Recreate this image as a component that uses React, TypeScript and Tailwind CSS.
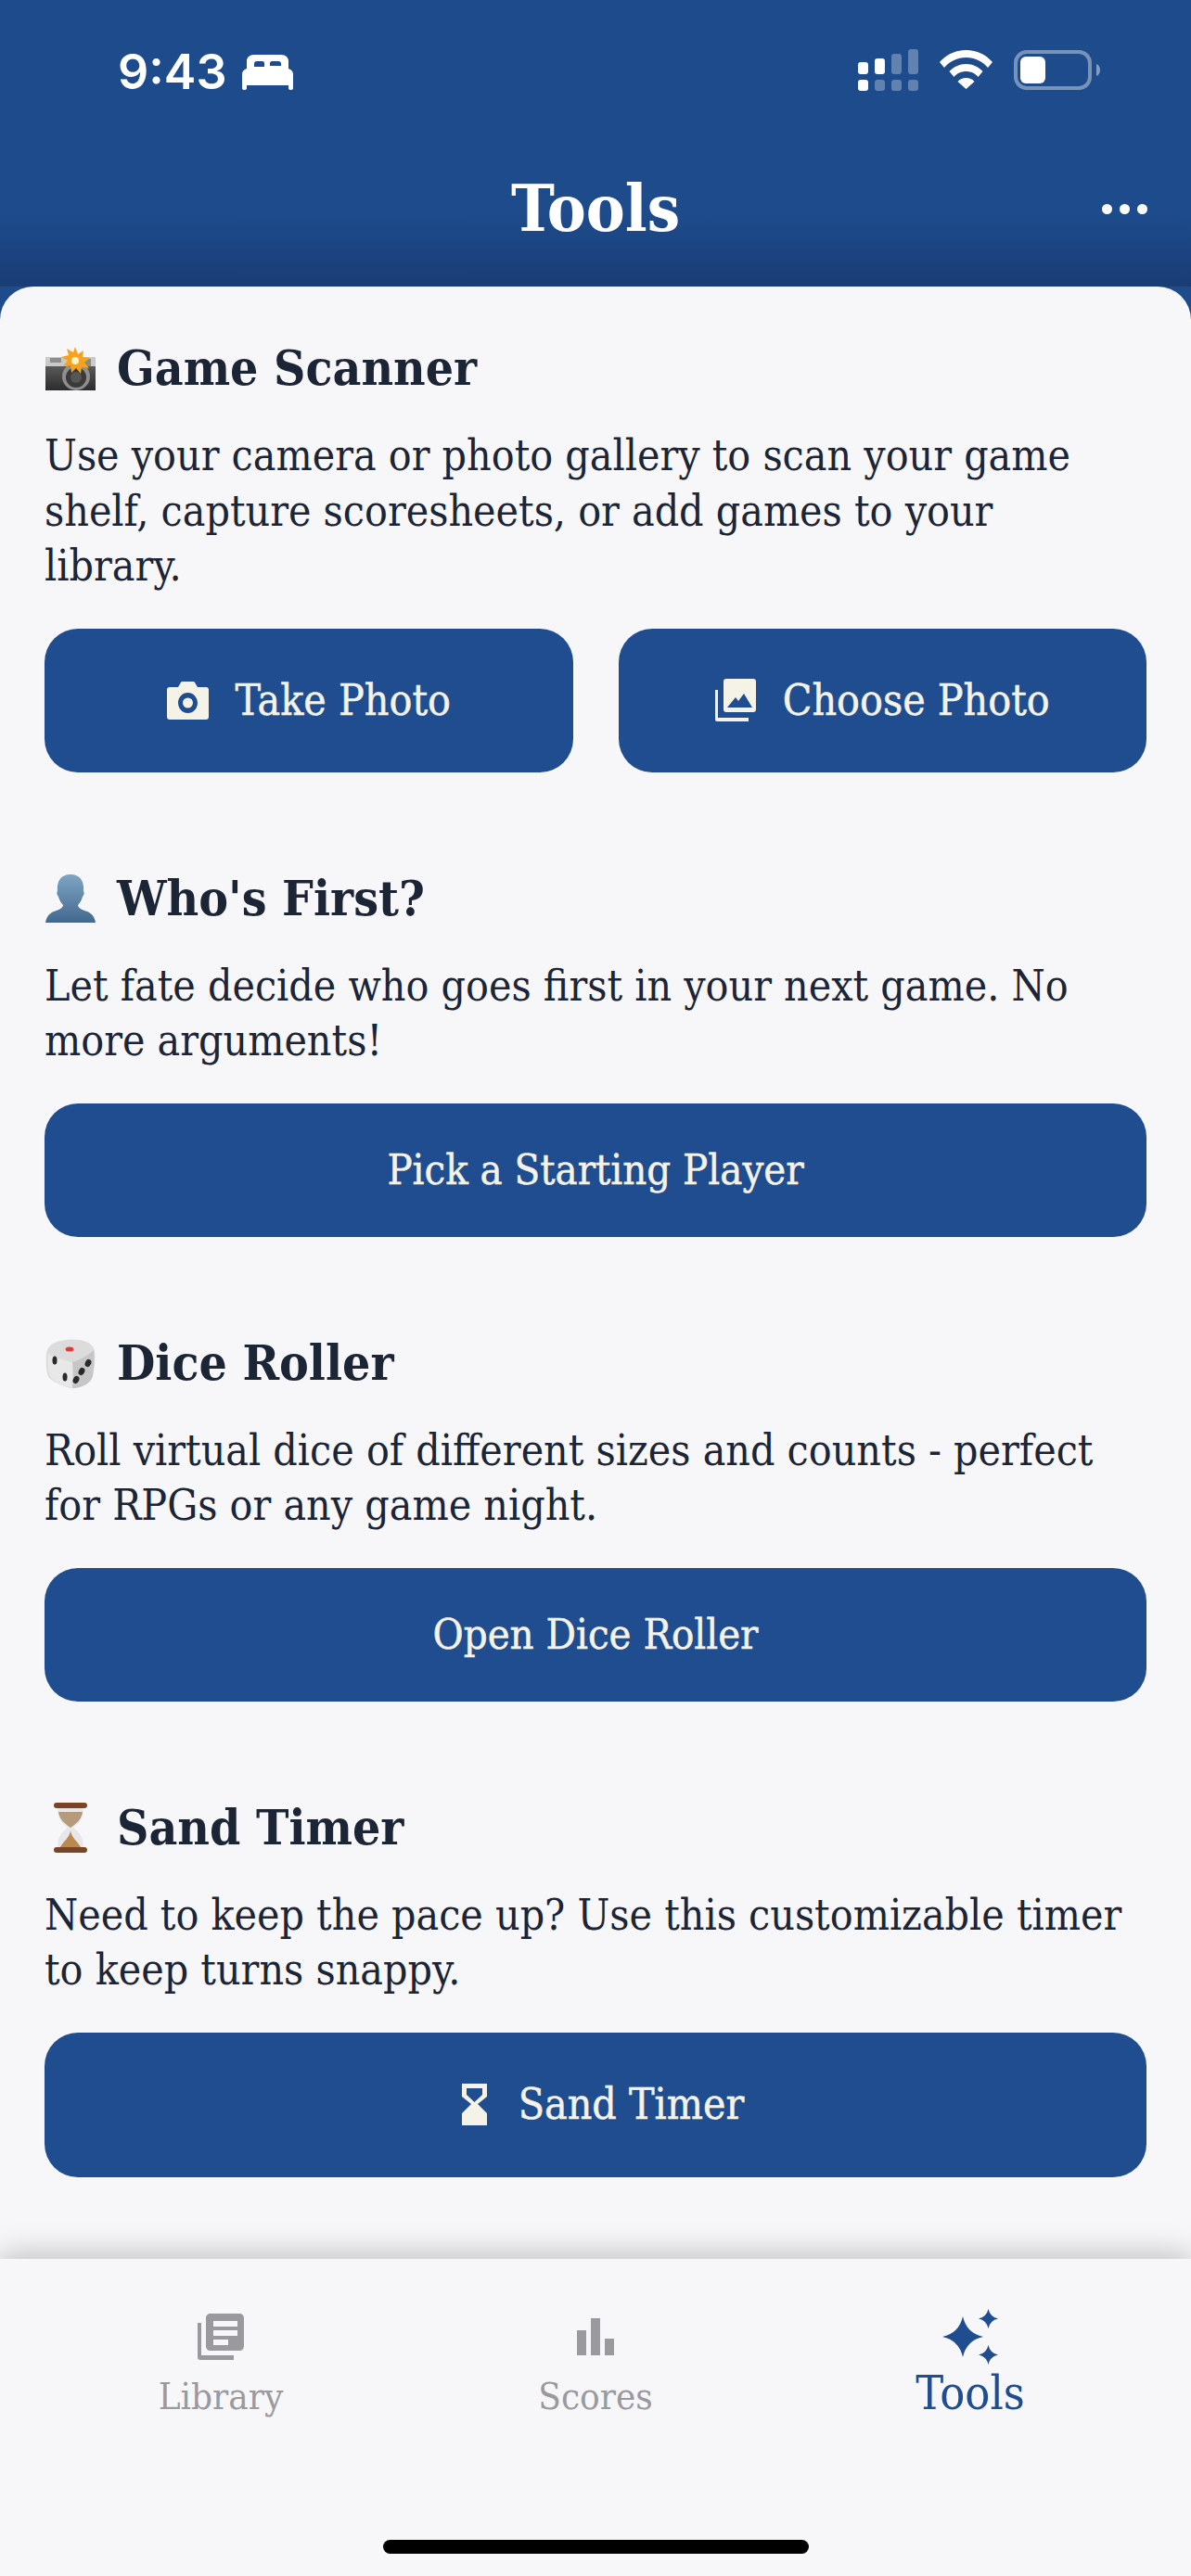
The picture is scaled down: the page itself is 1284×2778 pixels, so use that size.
import { ReactNode } from "react";

const serif = "font-['DejaVu_Serif_Condensed','DejaVu_Serif',serif] [font-stretch:condensed]";

function Star({ cx, cy, r }: { cx: number; cy: number; r: number }) {
  const k = r * 0.18;
  return (
    <path
      d={`M${cx} ${cy - r}Q${cx + k} ${cy - k} ${cx + r} ${cy}Q${cx + k} ${cy + k} ${cx} ${cy + r}Q${cx - k} ${cy + k} ${cx - r} ${cy}Q${cx - k} ${cy - k} ${cx} ${cy - r}Z`}
    />
  );
}

function CameraFlashEmoji() {
  return (
    <svg width="56" height="47" viewBox="-1 0 56 47">
      <defs>
        <linearGradient id="camBody" x1="0" y1="0" x2="0" y2="1">
          <stop offset="0" stopColor="#5a5a5a" />
          <stop offset="1" stopColor="#2c2c2c" />
        </linearGradient>
      </defs>
      <rect x="0" y="11" width="54" height="12" fill="#c9c9c9" />
      <rect x="0" y="21" width="54" height="26" fill="url(#camBody)" />
      <rect x="5" y="12" width="12" height="5" fill="#8d8d8d" />
      <rect x="38" y="13" width="11" height="8" fill="#8a8a80" />
      <circle cx="33" cy="32" r="15" fill="#8e8e8e" />
      <circle cx="33" cy="33" r="11" fill="#3a3a3a" />
      <circle cx="33" cy="33" r="6" fill="#565656" />
      <path
        d="M32 0l3 8 6-4-1 7 8 1-6 5 5 6-8-1-1 7-5-6-5 5-1-8-8 1 5-6-7-4 8-2-2-7 7 4z"
        fill="#f6a21d"
      />
      <circle cx="32" cy="15" r="4" fill="#fff3c8" />
    </svg>
  );
}

function PersonEmoji() {
  return (
    <svg width="54" height="52" viewBox="0 0 54 52">
      <defs>
        <linearGradient id="personFill" x1="0" y1="0" x2="0" y2="1">
          <stop offset="0" stopColor="#7fa5c4" />
          <stop offset="1" stopColor="#43688e" />
        </linearGradient>
      </defs>
      <path
        d="M27 0c11 0 15 8 14 18 1 1 1 4-1 6-1 4-3 7-5 9 0 3 4 5 10 7 5 2 8 6 9 12H0c1-6 4-10 9-12 6-2 10-4 10-7-2-2-4-5-5-9-2-2-2-5-1-6C12 8 16 0 27 0z"
        fill="url(#personFill)"
      />
    </svg>
  );
}

function DiceEmoji() {
  return (
    <svg width="54" height="56" viewBox="0 0 54 56">
      <path d="M10 6c8-4 26-5 34-1 5 2 8 5 9 10 1 8 0 20-2 27-1 4-4 7-9 10-4 2-11 4-15 3-8-2-19-7-23-11-3-4-4-18-3-26 0-5 4-10 9-12z" fill="#dcdcdc" />
      <path d="M3 18c-1 8 0 22 3 26 4 4 15 9 23 11 1-8 1-22 0-28-8-2-20-5-26-9z" fill="#e8e8e8" />
      <path d="M29 27c7-2 17-7 23-13 1 8 0 21-1 28-1 4-4 7-9 10-4 2-9 3-13 3 1-8 1-22 0-28z" fill="#c6c6c6" />
      <ellipse cx="26" cy="13" rx="4.5" ry="2.5" fill="#e23b33" />
      <ellipse cx="10" cy="25" rx="2.5" ry="4.5" fill="#2a2a2a" />
      <ellipse cx="21" cy="43" rx="2.5" ry="4.5" fill="#2a2a2a" />
      <ellipse cx="46" cy="28" rx="3.2" ry="4.2" fill="#2a2a2a" transform="rotate(25 46 28)" />
      <ellipse cx="39" cy="37" rx="3.2" ry="4.2" fill="#2a2a2a" transform="rotate(25 39 37)" />
      <ellipse cx="33" cy="46" rx="3.2" ry="4.2" fill="#2a2a2a" transform="rotate(25 33 46)" />
    </svg>
  );
}

function HourglassEmoji() {
  return (
    <svg width="36" height="54" viewBox="0 0 36 54">
      <path d="M4 5c0 12 4 17 11 22C8 32 4 37 4 49h28c0-12-4-17-11-22 7-5 11-10 11-22z" fill="#e8e8ec" />
      <path d="M5 10c1 8 6 12 13 17 7-5 12-9 13-17z" fill="#b59b7c" />
      <path d="M18 30c-1 8-7 11-11 18h22c-4-7-10-10-11-18z" fill="#b9894f" />
      <rect x="0" y="0" width="36" height="6" rx="3" fill="#7a4526" />
      <rect x="0" y="48" width="36" height="6" rx="3" fill="#7a4526" />
    </svg>
  );
}

function CameraIcon() {
  return (
    <svg width="45" height="41" viewBox="0 0 45 41">
      <path
        fillRule="evenodd"
        d="M3 6h9l3-5c.3-.6 1-1 2-1h11c1 0 1.700.4 2 1l3 5h9c2 0 3 1 3 3v29c0 2-1 3-3 3H3c-2 0-3-1-3-3V9c0-2 1-3 3-3zm19.500 6a10.500 11 0 1 0 0 22 10.500 11 0 0 0 0-22zm0 5.500a5.500 5.500 0 1 1 0 11 5.500 5.500 0 0 1 0-11z"
        fill="#f5f2e8"
      />
    </svg>
  );
}

function GalleryIcon() {
  return (
    <svg width="44" height="46" viewBox="0 0 44 46" fill="#f5f2e8">
      <path d="M0 12h3v30h33v4H2c-1 0-2-1-2-2z" />
      <path
        fillRule="evenodd"
        d="M12 0h29c2 0 3 1 3 3v30c0 2-1 3-3 3H12c-2 0-3-1-3-3V3c0-2 1-3 3-3zm1 31h27l-9-15-6 8-3-4z"
      />
    </svg>
  );
}

function HourglassIcon() {
  return (
    <svg className="ml-[16px] mr-[5px]" width="27" height="45" viewBox="0 0 27 45" fill="#f5f2e8">
      <path
        fillRule="evenodd"
        d="M0 0h27v14l-10 8 10 10v13H0V32l10-10L0 14zm5 5v7l8.500 8L22 12V5z"
      />
    </svg>
  );
}

function LibraryIcon() {
  return (
    <svg width="50" height="50" viewBox="0 0 50 50" fill="#9a9a9e">
      <path d="M0 10h4v35h35v5H3c-2 0-3-1-3-3z" />
      <path
        fillRule="evenodd"
        d="M14 0h31c3 0 5 2 5 5v30c0 3-2 5-5 5H14c-3 0-5-2-5-5V5c0-3 2-5 5-5zm3 8v6h26V8zm0 10v6h26v-6zm0 10v6h16v-6z"
      />
    </svg>
  );
}

function ScoresIcon() {
  return (
    <svg width="40" height="40" viewBox="0 0 40 40" fill="#9a9a9e">
      <rect x="0" y="13" width="10" height="27" />
      <rect x="15" y="0" width="10" height="40" />
      <rect x="30" y="22" width="10" height="18" />
    </svg>
  );
}

function ToolsIcon() {
  return (
    <svg width="60" height="60" viewBox="0 0 60 60" fill="#1f4d8f">
      <Star cx={22} cy={30} r={22} />
      <Star cx={49.5} cy={10.5} r={10.5} />
      <Star cx={49.5} cy={49.5} r={10.5} />
    </svg>
  );
}

function BedIcon() {
  return (
    <svg width="55" height="38" viewBox="0 0 55 38" fill="#fff">
      <path
        fillRule="evenodd"
        d="M13 0h29c5 0 8 3 8 7v8c3 1 5 3 5 6v15c0 1-1 2-2 2h-1c-1 0-2-1-2-2v-3H5v3c0 1-1 2-2 2H2c-1 0-2-1-2-2V21c0-3 2-5 5-6V7c0-4 3-7 8-7zm3 7c-2 0-3 1-3 3v3h11v-4c0-1-1-2-2-2zm16 0c-1 0-2 1-2 2v3h12v-2c0-2-1-3-3-3z"
      />
    </svg>
  );
}

function StatusIcons() {
  return (
    <div className="flex items-start gap-[23px]">
      <svg width="65" height="45" viewBox="0 0 65 45" fill="#fff">
        <rect x="0" y="14" width="11" height="13" rx="3" />
        <rect x="18" y="10" width="11" height="17" rx="3" />
        <rect x="36" y="5" width="11" height="22" rx="3" fillOpacity="0.3" />
        <rect x="54" y="0" width="11" height="27" rx="3" fillOpacity="0.3" />
        <rect x="0" y="33" width="11" height="12" rx="3" />
        <rect x="18" y="33" width="11" height="12" rx="3" fillOpacity="0.3" />
        <rect x="36" y="33" width="11" height="12" rx="3" fillOpacity="0.3" />
        <rect x="54" y="33" width="11" height="12" rx="3" fillOpacity="0.3" />
      </svg>
      <svg className="mt-[1px]" width="57" height="42" viewBox="0 0 57 42" fill="#fff">
        <path d="M28.500 0C40 0 50 5 57 13l-5 6C46 12 38 8 28.500 8S11 12 5 19l-5-6C7 5 17 0 28.500 0z" />
        <path d="M28.500 15c7 0 13.500 3 18 8l-5 6c-3-4-8-6-13-6s-10 2-13 6l-5-6c4.500-5 11-8 18-8z" />
        <path d="M28.500 30c3.500 0 6.500 1 9 4l-9 8-9-8c2.500-3 5.500-4 9-4z" />
      </svg>
      <svg className="mt-[1px]" width="93" height="43" viewBox="0 0 93 43">
        <rect x="2" y="2" width="80" height="39" rx="12" fill="none" stroke="#fff" strokeOpacity="0.4" strokeWidth="4" />
        <rect x="7" y="7" width="27" height="29" rx="6" fill="#fff" />
        <path d="M89 15c3 1 4 4 4 6.500s-1 5.500-4 6.500z" fill="#fff" fillOpacity="0.45" />
      </svg>
    </div>
  );
}

function ActionButton({ height, icon, label }: { height: string; icon?: ReactNode; label: string }) {
  return (
    <button className={`flex w-full items-center justify-center gap-[29px] rounded-[36px] bg-[#1f4d8f] ${height}`}>
      {icon}
      <span className={`font-medium text-[#f5f2e8] [-webkit-text-stroke:0.5px_#f5f2e8] ${icon ? "text-[46px]" : "text-[45px]"}`}>{label}</span>
    </button>
  );
}

function Section({ emoji, title, text, children }: { emoji: ReactNode; title: string; text: string[]; children: ReactNode }) {
  return (
    <section>
      <h2 className="flex h-[72px] items-center gap-[22px] text-[53px] font-bold text-[#1c2535]">
        <span className="flex w-[56px] items-center justify-center">{emoji}</span>
        {title}
      </h2>
      <p className="mb-[37px] mt-[29px] text-[46px] leading-[59.5px] text-[#1c2535]">
        {text.map((line) => (
          <span key={line} className="block whitespace-nowrap">
            {line}
          </span>
        ))}
      </p>
      {children}
    </section>
  );
}

function NavItem({ icon, label, active }: { icon: ReactNode; label: string; active?: boolean }) {
  return (
    <div className="flex h-[130px] flex-col items-center">
      <div className="flex h-[72px] items-center">{icon}</div>
      <span className={active ? "text-[50px] leading-[50px] text-[#1f4d8f]" : "mt-[3px] text-[40px] leading-[50px] text-[#9a9a9e]"}>
        {label}
      </span>
    </div>
  );
}

export default function App() {
  return (
    <div className={`flex h-[2778px] w-[1284px] flex-col overflow-hidden bg-[#1e4b8c] ${serif}`}>
      <header className="relative h-[309px] shrink-0 bg-gradient-to-b from-[#1e4b8c] from-75% to-[#1a3d75]">
        <div className="flex h-[180px] items-start justify-between pl-[127px] pr-[98px] pt-[53px]">
          <div className="flex items-center gap-[16px]">
            <span className="font-['Inter',sans-serif] text-[52px] font-semibold leading-[50px] text-white [font-stretch:normal]">9:43</span>
            <BedIcon />
          </div>
          <StatusIcons />
        </div>
        <h1 className="text-center text-[70px] font-bold leading-[90px] text-white">Tools</h1>
        <div className="absolute right-[47px] top-[220px] flex gap-[8px]">
          <span className="size-[11px] rounded-full bg-white" />
          <span className="size-[11px] rounded-full bg-white" />
          <span className="size-[11px] rounded-full bg-white" />
        </div>
      </header>

      <main className="flex min-h-0 flex-1 flex-col gap-[100px] overflow-hidden rounded-t-[36px] bg-[#f7f7fa] px-[48px] pt-[52px]">
        <Section
          emoji={<CameraFlashEmoji />}
          title="Game Scanner"
          text={["Use your camera or photo gallery to scan your game", "shelf, capture scoresheets, or add games to your", "library."]}
        >
          <div className="grid grid-cols-2 gap-[49px]">
            <ActionButton height="h-[155px]" icon={<CameraIcon />} label="Take Photo" />
            <ActionButton height="h-[155px]" icon={<GalleryIcon />} label="Choose Photo" />
          </div>
        </Section>
        <Section
          emoji={<PersonEmoji />}
          title="Who's First?"
          text={["Let fate decide who goes first in your next game. No", "more arguments!"]}
        >
          <ActionButton height="h-[144px]" label="Pick a Starting Player" />
        </Section>
        <Section
          emoji={<DiceEmoji />}
          title="Dice Roller"
          text={["Roll virtual dice of different sizes and counts - perfect", "for RPGs or any game night."]}
        >
          <ActionButton height="h-[144px]" label="Open Dice Roller" />
        </Section>
        <Section
          emoji={<HourglassEmoji />}
          title="Sand Timer"
          text={["Need to keep the pace up? Use this customizable timer", "to keep turns snappy."]}
        >
          <ActionButton height="h-[156px]" icon={<HourglassIcon />} label="Sand Timer" />
        </Section>
      </main>

      <nav className="relative z-10 h-[342px] shrink-0 bg-[#f7f7fa] shadow-[0_-6px_30px_rgba(0,0,0,0.22)]">
        <div className="grid grid-cols-3 px-[36px] pt-[48px]">
          <NavItem icon={<LibraryIcon />} label="Library" />
          <NavItem icon={<ScoresIcon />} label="Scores" />
          <NavItem icon={<ToolsIcon />} label="Tools" active />
        </div>
        <div className="absolute bottom-[24px] left-[413px] h-[15px] w-[459px] rounded-full bg-black" />
      </nav>
    </div>
  );
}
